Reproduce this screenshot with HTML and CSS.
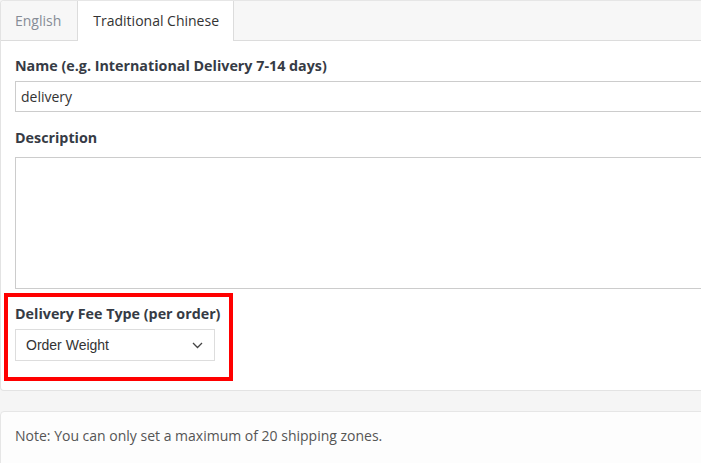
FILE: index.html
```html
<!DOCTYPE html>
<html>
<head>
<meta charset="utf-8">
<link rel="stylesheet" href="styles.css">
</head>
<body>
<div class="page">
  <div class="card">
    <div class="tabs">
      <div class="tab">English</div>
      <div class="tab active">Traditional Chinese</div>
    </div>
    <div class="form">
      <div class="group">
        <label class="label">Name (e.g. International Delivery 7-14 days)</label>
        <div class="input">delivery</div>
      </div>
      <div class="group desc">
        <label class="label">Description</label>
        <div class="textarea"></div>
      </div>
      <div class="group fee">
        <div class="highlight"></div>
        <label class="label">Delivery Fee Type (per order)</label>
        <div class="select">
          <span>Order Weight</span>
          <svg class="chev" width="11" height="7" viewBox="0 0 11 7"><path d="M1 1l4.5 4.5L10 1" fill="none" stroke="#444" stroke-width="1.3"/></svg>
        </div>
      </div>
    </div>
  </div>
  <div class="card note-card">
    <p class="note">Note: You can only set a maximum of 20 shipping zones.</p>
  </div>
</div>
</body>
</html>
```
FILE: styles.css
```css
html, body {
  margin: 0;
  padding: 0;
  background: #f5f5f5;
  overflow: hidden;
}
body {
  font-family: "Open Sans", "Liberation Sans", sans-serif;
  font-size: 14px;
  color: #333;
}
.page {
  width: 760px;
}
.card {
  background: #fff;
  border: 1px solid #e3e3e3;
  border-radius: 4px;
  border-top-color: #e6e6e6;
}
.tabs {
  display: flex;
  height: 39px;
  background: #f7f7f7;
  border-bottom: 1px solid #dcdcdc;
  border-radius: 4px 4px 0 0;
}
.tab {
  padding: 0 15px;
  line-height: 39px;
  color: #868c96;
  border-right: 1px solid transparent;
}
.tab.active {
  background: #fff;
  color: #333;
  border-left: 1px solid #dcdcdc;
  border-right: 1px solid #dcdcdc;
  height: 40px;
  margin-bottom: -1px;
  padding: 0 14px 0 15px;
}
.tab:first-child {
  padding: 0 15px 0 14px;
}
.form {
  padding: 16px 0 29px 14px;
}
.group {
  position: relative;
}
.group + .group {
  margin-top: 17px;
}
.label {
  display: block;
  font-weight: bold;
  font-size: 14.3px;
  line-height: 18px;
  color: #363b45;
}
.input {
  margin-top: 6px;
  height: 29px;
  line-height: 29px;
  border: 1px solid #ccc;
  padding: 0 5px;
  color: #333;
}
.desc .textarea {
  margin-top: 10px;
  height: 130px;
  border: 1px solid #ccc;
}
.group.fee {
  margin-top: 16px;
}
.select {
  margin-top: 6px;
  width: 178px;
  height: 30px;
  border: 1px solid #ddd;
  padding: 0 10px;
  display: flex;
  align-items: center;
  justify-content: space-between;
  font-family: "Liberation Sans", Arial, sans-serif;
  font-size: 14px;
  color: #333;
  background: #fff;
}
.chev {
  margin-top: 1px;
  margin-right: 1px;
}
.highlight {
  position: absolute;
  left: -11px;
  top: -12px;
  width: 221px;
  height: 80px;
  border: 4px solid #ff0000;
}
.note-card {
  margin-top: 20px;
  background: #fdfdfd;
  border-color: #e6e6e6;
}
.note {
  margin: 0;
  padding: 15px 14px 40px;
  line-height: 18px;
  color: #555;
}
```
